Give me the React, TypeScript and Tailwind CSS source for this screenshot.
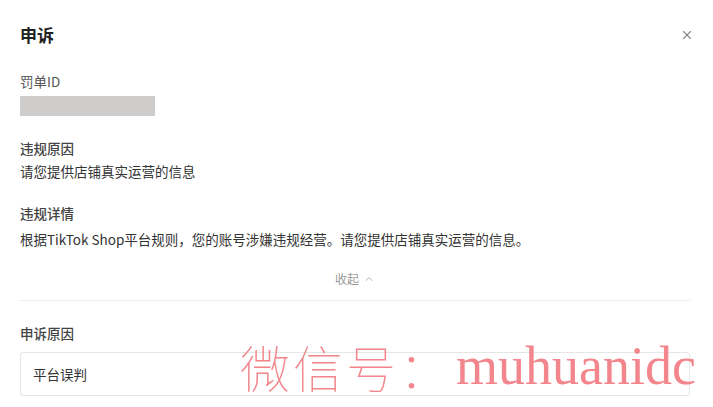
import React from 'react';
import { X, ChevronUp } from 'lucide-react';

export default function App() {
  return (
    <div
      className="relative w-[713px] h-[407px] overflow-hidden bg-white text-[#333]"
      style={{ fontFamily: '"Noto Sans CJK SC", "Liberation Sans", sans-serif' }}
    >
      <div className="flex flex-col pl-5 pr-[23px]">
        {/* 标题栏 */}
        <div className="flex items-center justify-between pt-[23px] h-[47px]">
          <h2 className="text-[17px] leading-6 font-bold text-[#222]">申诉</h2>
          <button className="text-[#8a8a8a] mr-[-4px]">
            <X className="w-[14px] h-[14px]" strokeWidth={2} />
          </button>
        </div>

        {/* 罚单ID */}
        <div className="mt-[24px] text-[13.5px] leading-5 text-[#555]">罚单ID</div>
        <div className="mt-[5px] h-[20px] w-[135px] bg-[#cfcccc]" />

        {/* 违规原因 */}
        <div className="mt-[22px] text-[13.5px] leading-5 font-medium text-[#444]">违规原因</div>
        <div className="mt-[3px] text-[13.5px] leading-5 text-[#333]">请您提供店铺真实运营的信息</div>

        {/* 违规详情 */}
        <div className="mt-[22px] text-[13.5px] leading-5 font-medium text-[#444]">违规详情</div>
        <div className="mt-[6px] text-[13.5px] leading-5 text-[#333]">
          根据TikTok Shop平台规则，您的账号涉嫌违规经营。请您提供店铺真实运营的信息。
        </div>

        <div className="mt-[20px] flex items-center justify-center gap-1 text-[12px] leading-5 text-[#999]">
          收起
          <ChevronUp className="w-3 h-3" strokeWidth={1.5} />
        </div>

        <div className="mt-[11px] h-px bg-[#eeeeee]" />

        {/* 申诉原因 */}
        <div className="mt-[22px] text-[13.5px] leading-5 font-medium text-[#444]">申诉原因</div>
        <div className="mt-[9px] h-[44px] rounded-[3px] border border-[#e6e6e6] flex items-center px-3 text-[13.5px] text-[#333]">
          平台误判
        </div>
      </div>

      {/* 水印 */}
      <div className="absolute left-[240px] top-[338px] flex items-end text-[#f2868c] pointer-events-none whitespace-nowrap">
        <span className="text-[50px] leading-[56px] tracking-[3px] font-thin">微信号：</span>
        <span
          className="text-[54px] leading-[56px] ml-[4px]"
          style={{ fontFamily: '"Liberation Serif", serif' }}
        >
          muhuanidc
        </span>
      </div>
    </div>
  );
}
